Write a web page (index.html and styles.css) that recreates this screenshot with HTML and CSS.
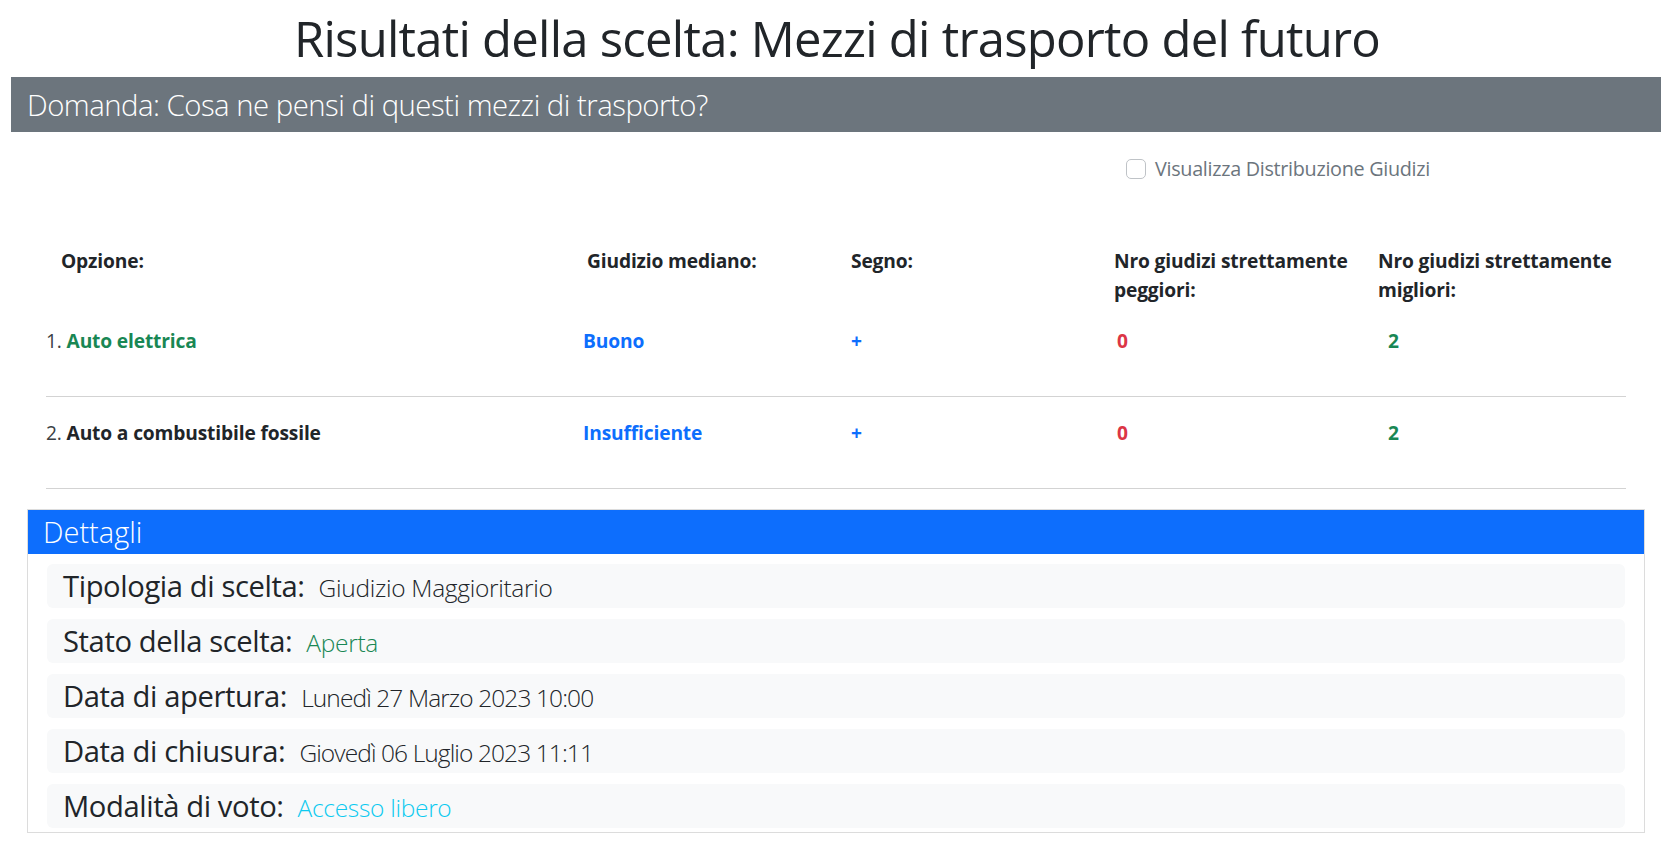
FILE: index.html
```html
<!DOCTYPE html>
<html lang="it">
<head>
<meta charset="utf-8">
<title>Risultati della scelta</title>
<link rel="stylesheet" href="styles.css">
</head>
<body>
<main class="page">
  <h1 class="title">Risultati della scelta: Mezzi di trasporto del futuro</h1>
  <div class="question">Domanda: Cosa ne pensi di questi mezzi di trasporto?</div>

  <div class="toggle-row">
    <label class="toggle">
      <input type="checkbox" class="check">
      <span>Visualizza Distribuzione Giudizi</span>
    </label>
  </div>

  <div class="results">
    <div class="row head">
      <div class="cell c1">Opzione:</div>
      <div class="cell c2">Giudizio mediano:</div>
      <div class="cell c3">Segno:</div>
      <div class="cell c4">Nro giudizi strettamente<br>peggiori:</div>
      <div class="cell c5">Nro giudizi strettamente<br>migliori:</div>
    </div>
    <div class="row item">
      <div class="cell"><span class="num">1.</span> <span class="green">Auto elettrica</span></div>
      <div class="cell blue">Buono</div>
      <div class="cell blue">+</div>
      <div class="cell red v4">0</div>
      <div class="cell green v5">2</div>
    </div>
    <div class="row item">
      <div class="cell"><span class="num">2.</span> <span>Auto a combustibile fossile</span></div>
      <div class="cell blue">Insufficiente</div>
      <div class="cell blue">+</div>
      <div class="cell red v4">0</div>
      <div class="cell green v5">2</div>
    </div>
  </div>

  <section class="card">
    <div class="card-header">Dettagli</div>
    <div class="card-body">
      <div class="detail"><span class="label">Tipologia di scelta:</span><span class="value">Giudizio Maggioritario</span></div>
      <div class="detail"><span class="label">Stato della scelta:</span><span class="value v-green">Aperta</span></div>
      <div class="detail"><span class="label">Data di apertura:</span><span class="value date">Lunedì 27 Marzo 2023 10:00</span></div>
      <div class="detail"><span class="label">Data di chiusura:</span><span class="value date">Giovedì 06 Luglio 2023 11:11</span></div>
      <div class="detail"><span class="label">Modalità di voto:</span><span class="value v-info">Accesso libero</span></div>
    </div>
  </section>
</main>
</body>
</html>
```

FILE: styles.css
```css
* { box-sizing: border-box; }

body {
  margin: 0;
  font-family: "Open Sans", "Noto Sans", sans-serif;
  color: #212529;
  background: #fff;
}

.page { padding-top: 6px; }

.title {
  margin: 0 0 7px;
  text-align: center;
  font-size: 49px;
  letter-spacing: -0.75px;
  font-weight: 400;
  line-height: 64px;
}

.question {
  margin: 0 13px 0 11px;
  height: 55px;
  padding: 0 16px;
  background: #6c757d;
  color: #fff;
  font-size: 29.3px;
  letter-spacing: -0.5px;
  font-weight: 300;
  display: flex;
  align-items: center;
}

.toggle-row {
  display: flex;
  padding: 21px 0 0 1126px;
}

.toggle {
  display: flex;
  align-items: center;
  gap: 9px;
  font-size: 19.8px;
  letter-spacing: -0.3px;
  line-height: 32px;
  color: #6c757d;
}

.check {
  appearance: none;
  -webkit-appearance: none;
  width: 20px;
  height: 20px;
  margin: 0;
  border: 1px solid #bfc3c7;
  border-radius: 5px;
  background: #fff;
}

.results { margin: 62px 48px 0 46px; }

.row {
  display: grid;
  grid-template-columns: 537px 268px 263px 264px 1fr;
  font-size: 19.2px;
  line-height: 28.8px;
  font-weight: 700;
  letter-spacing: -0.15px;
}

.head .c1 { padding-left: 15px; }
.head .c2 { padding-left: 4px; }

.item {
  padding: 22.6px 0 39.6px;
  border-bottom: 1px solid #d3d3d3;
}

.num { font-weight: 400; color: #3a3f44; }
.green { color: #198754; }
.blue { color: #0d6efd; }
.red { color: #dc3545; }
.v4 { padding-left: 3px; }
.v5 { padding-left: 10px; }

.card {
  margin: 20px 29px 0 27px;
  border: 1px solid #dcdcdc;
}

.card-header {
  height: 44px;
  padding: 0 16px 0 15px;
  background: #0d6efd;
  color: #fff;
  font-size: 29px;
  font-weight: 300;
  line-height: 44px;
}

.card-body {
  display: flex;
  flex-direction: column;
  gap: 10.5px;
  padding: 10px 19px 4px;
}

.detail {
  height: 44.5px;
  padding-left: 16px;
  background: #f8f9fa;
  border-radius: 6px;
  line-height: 44px;
  white-space: nowrap;
}

.label {
  font-size: 29.2px;
  letter-spacing: -0.4px;
  font-weight: 400;
  margin-right: 14px;
}

.value {
  font-size: 24.5px;
  letter-spacing: -0.3px;
  font-weight: 300;
  color: #212529;
}

.value.date { letter-spacing: -0.9px; }

.v-green { color: #198754; }
.v-info { color: #0dcaf0; }
```
